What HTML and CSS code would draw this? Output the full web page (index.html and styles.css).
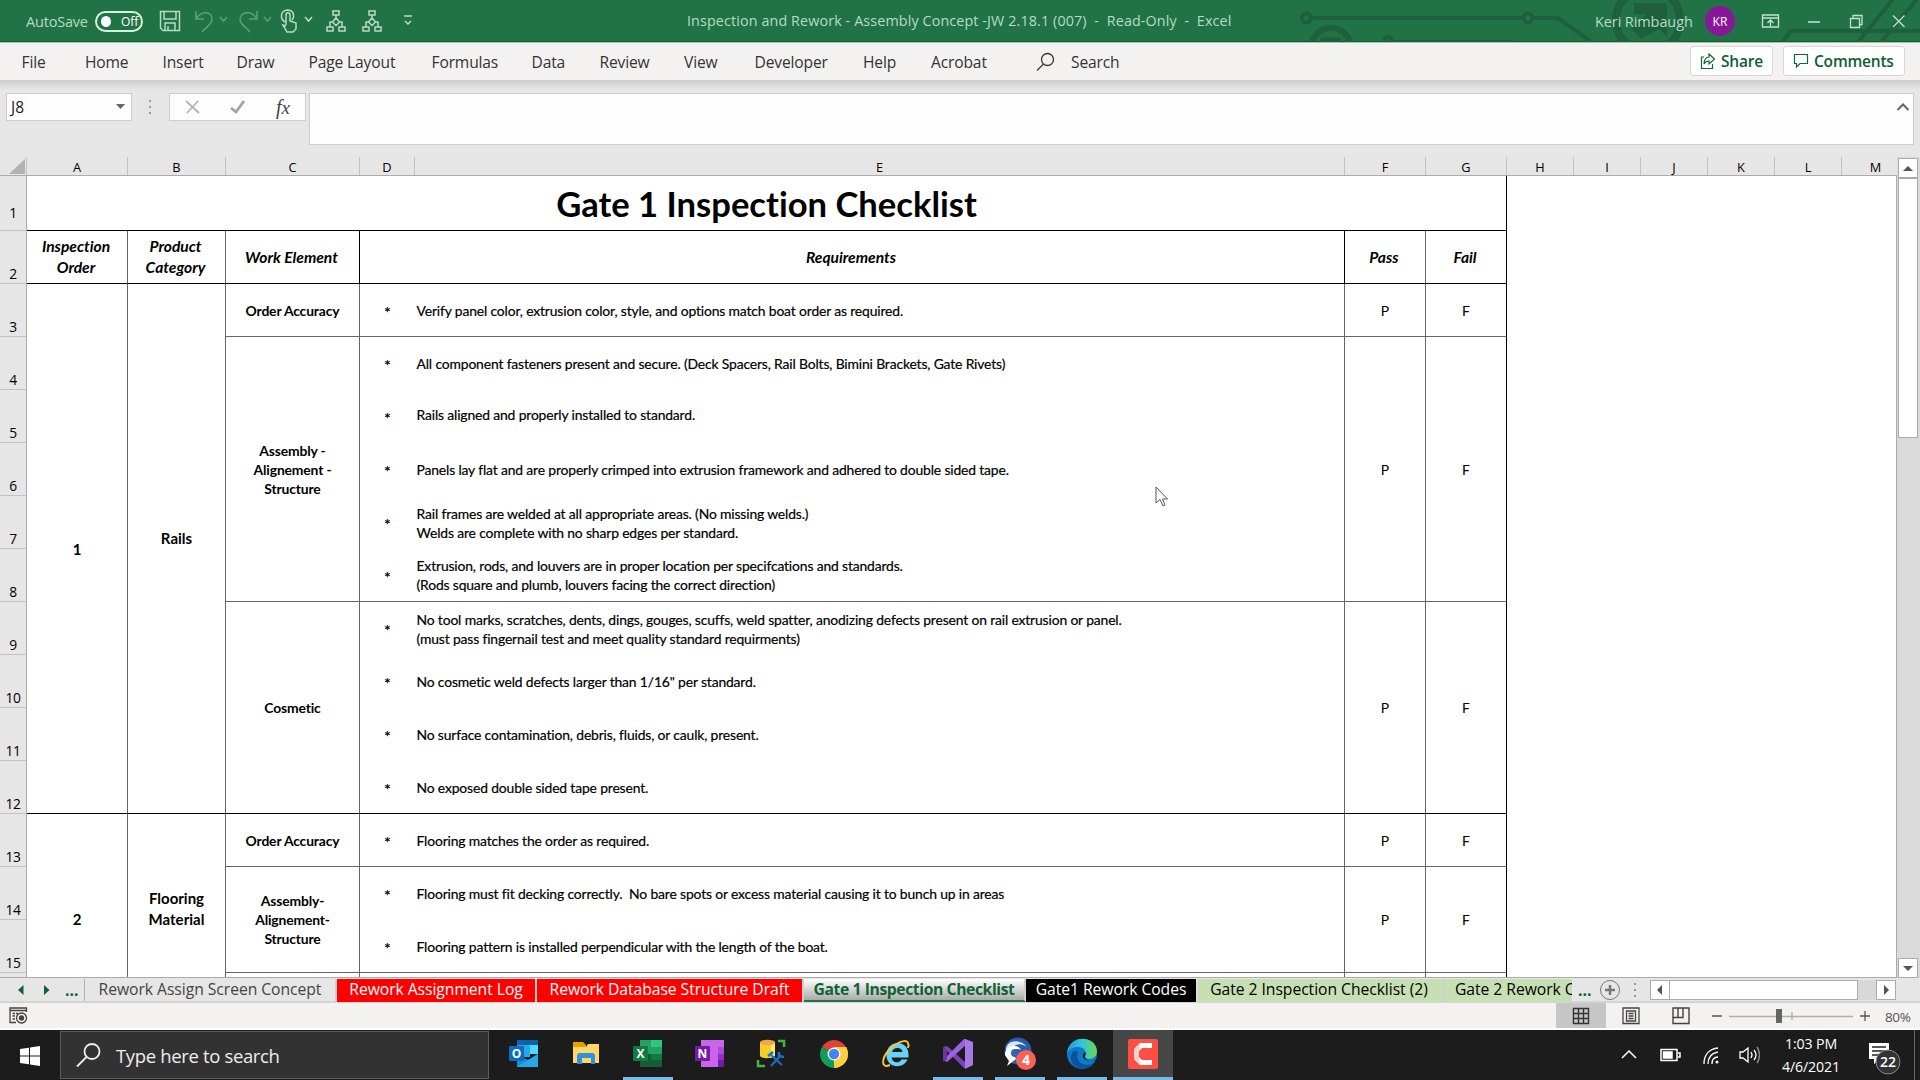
FILE: index.html
```
<!DOCTYPE html>
<html lang="en">
<head>
<meta charset="utf-8">
<title>Inspection and Rework - Excel</title>
<link rel="stylesheet" href="styles.css">
</head>
<body>
<div class="app">
  <header class="titlebar">
    <svg class="circuit" width="640" height="42" viewBox="0 0 640 42" fill="none" stroke="#1e5f3e" stroke-width="4">
      <circle cx="26.500" cy="18" r="4.500"/><path d="M32 18H242M254 18H278L316 45"/><circle cx="248" cy="18" r="4.500"/>
      <circle cx="51" cy="48" r="20" stroke-width="6"/><path d="M40 40H60" stroke-width="5"/>
      <circle cx="108" cy="41" r="4"/><path d="M113 42H235"/>
      <circle cx="368" cy="20" r="32" stroke-width="8"/><path d="M354 3H387V37L379 29L361 39L351 29L367 14H354Z" fill="#1e5f3e" stroke="none"/>
      <path d="M502 42L511 31H640M578 42L614 -2M601 42L638 -2"/>
    </svg>
    <div class="quick">
      <span class="autosave">AutoSave</span>
      <span class="toggle"><i></i>Off</span>
      <svg class="q-icons" width="270" height="30" viewBox="0 0 270 30" fill="none" stroke="#b5dcc3" stroke-width="1.500">
        <path d="M1.500 4.500H20.500V23.500H4L1.500 21ZM5 4.500V12H17V4.500M6 23V16H16V23M9 23V19"/>
        <g stroke="#5c9f78"><path d="M37 4V12H45M37 12C43 2 54 5 53 13C52 18 47 20 43 25M61 10L64.500 14L68 10"/><path d="M98 4V12H90M98 12C92 2 81 5 81 13C82 18 87 20 91 25M105 10L108.500 14L112 10"/></g>
        <path d="M126 15C121 12 121 4 128 3C135 3 136 9 133 13M127 18V8C127 5 131 5 131 8V14L137 16V22L134 25H128L124 18L127 19M146 10L149.500 14L153 10"/>
        <path id="tree" d="M174 4H180V8H174ZM177 8V11M177 11L180.500 15L177 18.500L173.500 15ZM173.500 15H171V20M180.500 15H183V20M168 20H174V24H168ZM180 20H186V24H180Z"/>
        <use href="#tree" x="36"/>
        <path d="M245 9H253M246 14L249 17L252 14"/>
      </svg>
    </div>
    <div class="doc-title">Inspection and Rework - Assembly Concept -JW 2.18.1 (007)&nbsp; - &nbsp;Read-Only&nbsp; - &nbsp;Excel</div>
    <div class="account"><span class="user">Keri Rimbaugh</span><span class="avatar">KR</span>
      <svg width="150" height="24" viewBox="0 0 150 24" fill="none" stroke="#c4e3cf" stroke-width="1.300">
        <path d="M1.500 6H17.500V18H1.500ZM1.500 9H17.500M9.500 17V11M6.500 14L9.500 11L12.500 14M47 13H59M89.500 9.500H98.500V18.500H89.500ZM92 9V6.500H101V15.500H99M132 6.500L143.500 18M143.500 6.500L132 18"/>
      </svg>
    </div>
  </header>

  <nav class="ribbon">
    <div class="menu"><span>File</span><span>Home</span><span>Insert</span><span>Draw</span><span>Page Layout</span><span>Formulas</span><span>Data</span><span>Review</span><span>View</span><span>Developer</span><span>Help</span><span>Acrobat</span>
      <svg width="24" height="24" viewBox="0 0 24 24" fill="none" stroke="#3b3a39" stroke-width="1.300"><circle cx="11.500" cy="9.500" r="6"/><path d="M7.500 14L1 20.500"/></svg>
      <span>Search</span></div>
    <div class="ribbon-actions">
      <button class="btn share"><svg width="16" height="18" viewBox="0 0 16 18" fill="none" stroke="#0c6b38" stroke-width="1.200"><path d="M4 5H1.500V16.500H12.500V12M9 2L14.500 7L9 12V9C6 9 5 10 4 12C4 8 6 5 9 5Z"/></svg>Share</button>
      <button class="btn comments"><svg width="16" height="18" viewBox="0 0 16 18" fill="none" stroke="#0c6b38" stroke-width="1.200"><path d="M1.500 2.500H14.500V11.500H7L3.500 15V11.500H1.500Z"/></svg>Comments</button>
    </div>
  </nav>

  <div class="formula">
    <div class="namebox"><span>J8</span><svg width="10" height="6" viewBox="0 0 10 6"><path d="M0 0H9L4.500 5Z" fill="#666"/></svg></div>
    <svg class="grip" width="4" height="14" viewBox="0 0 4 14" fill="#999"><path d="M1 0H3V2H1ZM1 6H3V8H1ZM1 12H3V14H1Z"/></svg>
    <div class="fx"><svg width="66" height="20" viewBox="0 0 66 20" fill="none"><path d="M2 4L15 16M14 4L3 16" stroke="#b4b4b4" stroke-width="1.800"/><path d="M47 11L52 15L60 4" stroke="#a3a3a3" stroke-width="2.800"/></svg><span>f<small>x</small></span></div>
    <div class="input"><svg width="14" height="10" viewBox="0 0 14 10" fill="none" stroke="#666" stroke-width="2"><path d="M1.500 8L7 2.500L12.500 8"/></svg></div>
  </div>

  <main class="sheet">
    <div class="colheads">
      <span class="corner"><svg width="16" height="15" viewBox="0 0 16 15"><path d="M16 0V15H0Z" fill="#b2b2b2"/></svg></span>
      <span>A</span><span>B</span><span>C</span><span>D</span><span>E</span><span>F</span><span>G</span><span>H</span><span>I</span><span>J</span><span>K</span><span>L</span><span class="last">M</span>
    </div>
    <div class="body">
      <div class="rownums"><span class="first">1</span><span>2</span><span>3</span><span>4</span><span>5</span><span>6</span><span>7</span><span>8</span><span>9</span><span>10</span><span>11</span><span>12</span><span>13</span><span>14</span><span>15</span><span></span></div>
      <div class="table">
        <div class="c title strong">Gate 1 Inspection Checklist</div>
        <div class="c head">Inspection<br>Order</div><div class="c head">Product<br>Category</div><div class="c head dark">Work Element</div><div class="c head wide dark">Requirements</div><div class="c head">Pass</div><div class="c head edge">Fail</div>

        <div class="c big r10 order">1</div><div class="c big r10 product">Rails</div>
        <div class="c work">Order Accuracy</div>
        <div class="c star">*</div><div class="c req">Verify panel color, extrusion color, style, and options match boat order as required.</div>
        <div class="c pf">P</div><div class="c pf edge">F</div>

        <div class="c work r5">Assembly -<br>Alignement -<br>Structure</div>
        <div class="c star open">*</div><div class="c req open">All component fasteners present and secure. (Deck Spacers, Rail Bolts, Bimini Brackets, Gate Rivets)</div>
        <div class="c pf r5">P</div><div class="c pf edge r5">F</div>
        <div class="c star open">*</div><div class="c req open raised">Rails aligned and properly installed to standard.</div>
        <div class="c star open">*</div><div class="c req open">Panels lay flat and are properly crimped into extrusion framework and adhered to double sided tape.</div>
        <div class="c star open">*</div><div class="c req open">Rail frames are welded at all appropriate areas. (No missing welds.)<br>Welds are complete with no sharp edges per standard.</div>
        <div class="c star">*</div><div class="c req">Extrusion, rods, and louvers are in proper location per specifcations and standards.<br>(Rods square and plumb, louvers facing the correct direction)</div>

        <div class="c work r4 strong">Cosmetic</div>
        <div class="c star open">*</div><div class="c req open">No tool marks, scratches, dents, dings, gouges, scuffs, weld spatter, anodizing defects present on rail extrusion or panel.<br>(must pass fingernail test and meet quality standard requirments)</div>
        <div class="c pf r4 strong">P</div><div class="c pf edge r4 strong">F</div>
        <div class="c star open">*</div><div class="c req open">No cosmetic weld defects larger than 1/16" per standard.</div>
        <div class="c star open">*</div><div class="c req open">No surface contamination, debris, fluids, or caulk, present.</div>
        <div class="c star strong">*</div><div class="c req strong">No exposed double sided tape present.</div>

        <div class="c big r4 open order2">2</div><div class="c big r4 open product2">Flooring<br>Material</div>
        <div class="c work">Order Accuracy</div>
        <div class="c star">*</div><div class="c req">Flooring matches the order as required.</div>
        <div class="c pf">P</div><div class="c pf edge">F</div>
        <div class="c work r2">Assembly-<br>Alignement-<br>Structure</div>
        <div class="c star open">*</div><div class="c req open">Flooring must fit decking correctly.&nbsp; No bare spots or excess material causing it to bunch up in areas</div>
        <div class="c pf r2">P</div><div class="c pf edge r2">F</div>
        <div class="c star">*</div><div class="c req">Flooring pattern is installed perpendicular with the length of the boat.</div>
        <div class="c open"></div><div class="c open star"></div><div class="c open req"></div><div class="c open"></div><div class="c open edge"></div>
      </div>
      <div class="empty"></div>
    </div>
    <div class="vscroll">
      <span class="sbtn"><svg width="10" height="7" viewBox="0 0 10 7"><path d="M5 1L10 6H0Z" fill="#555"/></svg></span>
      <span class="vthumb"></span><span class="vtrack"></span>
      <span class="sbtn"><svg width="10" height="7" viewBox="0 0 10 7"><path d="M5 6L10 1H0Z" fill="#555"/></svg></span>
    </div>
  </main>

  <div class="tabs">
    <div class="tabnav"><svg width="34" height="12" viewBox="0 0 34 12" fill="#0e6434"><path d="M5.500 1V11L0 6ZM26 1V11L31.500 6Z"/></svg><b>...</b></div>
    <span class="tab plain">Rework Assign Screen Concept</span>
    <span class="tab red log">Rework Assignment Log</span>
    <span class="tab red draft">Rework Database Structure Draft</span>
    <span class="tab active">Gate 1 Inspection Checklist</span>
    <span class="tab black">Gate1 Rework Codes</span>
    <span class="tab green g1">Gate 2 Inspection Checklist (2)</span>
    <span class="tab green g2">Gate 2 Rework C</span>
    <b class="more">...</b>
    <svg class="add" width="22" height="22" viewBox="0 0 22 22" fill="none" stroke="#777"><circle cx="11" cy="11" r="9.500"/><path d="M6 11H16M11 6V16" stroke-width="2.500"/></svg>
    <svg class="grip2" width="4" height="14" viewBox="0 0 4 14" fill="#999"><path d="M1 0H3V2H1ZM1 6H3V8H1ZM1 12H3V14H1Z"/></svg>
    <div class="hscroll"><span class="hbtn"><svg width="6" height="10" viewBox="0 0 6 10"><path d="M5 0V10L0 5Z" fill="#555"/></svg></span><span class="hthumb"></span><span class="htrack"></span><span class="hbtn"><svg width="6" height="10" viewBox="0 0 6 10"><path d="M1 0V10L6 5Z" fill="#555"/></svg></span></div>
  </div>

  <div class="status">
    <svg class="macro" width="20" height="18" viewBox="0 0 20 18" fill="none" stroke="#444" stroke-width="1.300"><path d="M17.500 5V1H1V15.500H7M1 3.500H17.500M3.500 6.500H6M7 6.500H9M3.500 9H6M3.500 12H6"/><circle cx="12.500" cy="11" r="5"/><circle cx="12.500" cy="11" r="2" fill="#444"/></svg>
    <div class="views">
      <span class="view on"><svg width="18" height="18" viewBox="0 0 18 18" fill="none" stroke="#333" stroke-width="1.400"><path d="M1.500 1.500H16.500V16.500H1.500ZM6.500 1V17M11.500 1V17M1 6.500H17M1 11.500H17"/></svg></span>
      <span class="view"><svg width="18" height="18" viewBox="0 0 18 18" fill="none" stroke="#444" stroke-width="1.300"><path d="M1 1H17V16.500H1ZM4.500 4H13.500V14H4.500ZM6.500 6.500H11.500M6.500 9H11.500M6.500 11.500H11.500"/></svg></span>
      <span class="view"><svg width="18" height="18" viewBox="0 0 18 18" fill="none" stroke="#444" stroke-width="1.400"><path d="M1 1H17V16.500H1ZM1 10.500H11V1M6 1V10"/></svg></span>
    </div>
    <svg class="zoom" width="164" height="18" viewBox="0 0 164 18"><path d="M0 9H10M148 9H158M153 4V14" stroke="#555" stroke-width="1.300"/><path d="M17 9.500H141" stroke="#b0b0b0" stroke-width="1.500"/><path d="M80 5V13" stroke="#999"/><path d="M64 2H70V16H64Z" fill="#666"/></svg>
    <span class="pct">80%</span>
  </div>

  <footer class="taskbar">
    <div class="start"><svg width="20" height="20" viewBox="0 0 20 20" fill="#fff"><path d="M0 3L9 1.700V9.500H0ZM10 1.500L20 0V9.500H10ZM0 10.500H9V18.300L0 17ZM10 10.500H20V20L10 18.500Z"/></svg></div>
    <div class="search"><svg width="26" height="26" viewBox="0 0 26 26" fill="none" stroke="#eee" stroke-width="1.800"><circle cx="16" cy="9.500" r="7.500"/><path d="M10.500 15L1 24.500"/></svg><span>Type here to search</span></div>
    <div class="apps">
      <span class="app-icon"><svg width="32" height="32" viewBox="0 0 32 32"><path d="M9 2H30V16H9Z" fill="#1066b5"/><path d="M9 7H22V19H9Z" fill="#28a8ea"/><path d="M22 7H30V16H22Z" fill="#50d9ff"/><path d="M15 2H30V7H15Z" fill="#0a63a8"/><path d="M9 17L20 22L30 16V29H9Z" fill="#1490df"/><path d="M9 29L30 16V29Z" fill="#28a8ea"/><rect x="1" y="8" width="15" height="15" rx="1" fill="#0f6cbd"/><text x="8.500" y="20" class="letter">O</text></svg></span>
      <span class="app-icon"><svg width="32" height="32" viewBox="0 0 32 32"><path d="M3 4H13L16 7V12H3Z" fill="#e8a000"/><path d="M3 9H16L18 6H29V25H3Z" fill="#ffd668"/><path d="M7 26V18Q7 15 10 15H22Q25 15 25 18V26H21V20H12V26Z" fill="#2f8fe0"/></svg></span>
      <span class="app-icon run"><svg width="32" height="32" viewBox="0 0 32 32"><path d="M8 2H19V16H8Z" fill="#21a366"/><path d="M19 2H30V9H19Z" fill="#33c481"/><path d="M19 9H30V16H19Z" fill="#21a366"/><path d="M8 16H19V29H8Z" fill="#185c37"/><path d="M19 16H30V22H19Z" fill="#107c41"/><path d="M19 22H30V29H19Z" fill="#185c37"/><rect x="1" y="8" width="15" height="15" rx="1" fill="#107c41"/><text x="8.500" y="20" class="letter">X</text></svg></span>
      <span class="app-icon"><svg width="32" height="32" viewBox="0 0 32 32"><path d="M7 2H30V29H7Z" fill="#ca64ea"/><path d="M24 9H30V16H24Z" fill="#ae4bd5"/><path d="M24 16H30V22H24Z" fill="#9332bf"/><path d="M24 22H30V29H24Z" fill="#7719aa"/><rect x="1" y="8" width="15" height="15" rx="1" fill="#7719aa"/><text x="8.500" y="20" class="letter">N</text></svg></span>
      <span class="app-icon"><svg width="32" height="32" viewBox="0 0 32 32" fill="none"><path d="M4 4V18C6 21 15 21 19 18V4Z" fill="#f6ce28"/><path d="M15 4H19V18L15 20Z" fill="#ffe477"/><ellipse cx="11.500" cy="4.500" rx="7.500" ry="2.700" fill="#f3a54a"/><path d="M22 3H28V9M2 22V28H9" stroke="#43b649" stroke-width="2.500"/><path d="M15 17L26 27M25 17L15 28" stroke="#1672c4" stroke-width="2"/><path d="M12 18L17 14M23 14L23 18L28 19" stroke="#1672c4" stroke-width="2.500"/></svg></span>
      <span class="app-icon"><svg width="32" height="32" viewBox="0 0 32 32"><path d="M16 16L3.900 9A14 14 0 0 1 28.100 9Z" fill="#db4437"/><path d="M16 16L28.100 9A14 14 0 0 1 16 30Z" fill="#ffcd40"/><path d="M16 16V30A14 14 0 0 1 3.900 9Z" fill="#0f9d58"/><path d="M16 9H28.100A14 14 0 0 1 16 30L22 19Z" fill="#ffcd40"/><circle cx="16" cy="16" r="6.500" fill="#fff"/><circle cx="16" cy="16" r="5.200" fill="#4285f4"/></svg></span>
      <span class="app-icon"><svg width="32" height="32" viewBox="0 0 32 32" fill="none"><path d="M11 17H28.500C29 1 6.500 1 6.500 17C6.500 31 24 31 27.500 21.500H21.500C19 26 12 25 11.500 19.500H28.500V17" fill="#66d3f7"/><path d="M12 14C13 8.500 22 8.500 22.500 14Z" fill="#1c1c1c"/><path d="M28 10C31 0 20 1 9 12C1 21 1 31 10 27" stroke="#f7c52d" stroke-width="2"/></svg></span>
      <span class="app-icon run"><svg width="32" height="32" viewBox="0 0 32 32"><path d="M1 9L5 8L24 25V30H22Z" fill="#7b44bd"/><path d="M1 22L5 24L24 7V1H22Z" fill="#9b62dc"/><path d="M1 9L5 11V22L1 23Z" fill="#68369f"/><path d="M23 1L31 4V27L23 31Z" fill="#a879e6"/></svg></span>
      <span class="app-icon run"><svg class="chat" width="36" height="34" viewBox="0 0 36 34"><circle cx="16" cy="14" r="13.500" fill="#285da8"/><path d="M4 14C3 3 18 1 25 10C17 4 9 8 10 18Z" fill="#d9e6f7"/><path d="M3 18C2 10 15 5 19 13C13 10 10 15 14 22L5 29L7 24Z" fill="#fff"/><circle cx="13" cy="16" r="4" fill="#2c67b7"/><circle cx="24" cy="23" r="10" fill="#fb6155"/><text x="24" y="28" class="badge">4</text></svg></span>
      <span class="app-icon run"><svg width="32" height="32" viewBox="0 0 32 32"><defs><linearGradient id="edge"><stop offset="0" stop-color="#169ed9"/><stop offset=".5" stop-color="#32c5dc"/><stop offset="1" stop-color="#66d94a"/></linearGradient></defs><circle cx="16" cy="16" r="15" fill="#1277c8"/><path d="M1 15C3 -4 30 -3 31 13C31 21 22 23 19 19C24 8 7 5 1 15Z" fill="url(#edge)"/><path d="M12 14C8 24 20 31 29 24C22 34 5 32 5 20C5 13 10 12 12 14Z" fill="#0b539d"/><path d="M20 14C15 15 15 24 28 23L32 19V23L27 28L31 22C25 25 18 22 19 18Z" fill="#1c1c1c"/></svg></span>
      <span class="app-icon run current"><svg width="32" height="32" viewBox="0 0 32 32"><rect x="1" y="1" width="30" height="30" rx="2" fill="#ff4f45"/><path d="M25 5H13L7 11V21L13 27H25V22H15L12 19V13L15 10H25Z" fill="#fff"/><path d="M7 11L13 5V10L12 13V19L13 27L7 21Z" fill="#eed2d0"/></svg></span>
    </div>
    <div class="tray">
      <svg width="140" height="26" viewBox="0 0 140 26" fill="none" stroke="#fff" stroke-width="1.500">
        <path d="M2 16L9 9L16 16"/><path d="M41 7.500H57V18.500H41ZM58 11H60V15H58"/><path d="M43.500 10H52V16H43.500Z" fill="#fff"/>
        <path d="M84 22C84 13 89 7 98 6M88 22C88 15 92 11 98 10M92 22C92 18 94 15 98 15" stroke-width="1.300"/><circle cx="97" cy="20" r="1.500" fill="#fff" stroke="none"/>
        <path d="M120 10H123L128 6V20L123 16H120ZM131 10Q133 13 131 16M134 8Q138 13 134 18" stroke-width="1.300"/><path d="M137 5Q142 13 137 21" stroke="#888"/>
      </svg>
      <div class="clock"><span>1:03 PM</span><span>4/6/2021</span></div>
      <svg class="note" width="36" height="38" viewBox="0 0 36 38"><path d="M1 3H21V19H12L6 24V19H1Z" fill="#fff"/><path d="M4 7H18M4 11H18M4 15H13" stroke="#222" stroke-width="1.300"/><circle cx="20" cy="22" r="12" fill="#333" stroke="#888"/><text x="20" y="27" class="count">22</text></svg>
      <i class="peek"></i>
    </div>
  </footer>
</div>
<svg class="cursor" width="14" height="22" viewBox="0 0 14 22"><path d="M1 1V17L5 13.500L8 20L10 19L7.500 13H12.500Z" fill="#fff" stroke="#555"/></svg>
</body>
</html>
```
FILE: styles.css
```
* { box-sizing: border-box; }
body { margin: 0; width: 1920px; height: 1080px; overflow: hidden; font-family: "Open Sans", "Noto Sans", sans-serif; color: #000; position: relative; }
svg { display: block; flex: none; }
.app { display: flex; flex-direction: column; height: 1080px; white-space: nowrap; }

/* Title bar */
.titlebar { position: relative; height: 43px; flex: none; background: #217346; border-bottom: 1px solid #a3c4b1; box-shadow: inset 0 -1px #125c31; color: #b5dcc3; display: grid; grid-template-columns: 687px 545px 1fr; align-items: center; }
.circuit { position: absolute; right: 0; top: 0; }
.quick { display: flex; align-items: center; padding-left: 26px; }
.autosave { font-size: 14.500px; width: 69px; letter-spacing: -.200px; }
.toggle { width: 48px; height: 21px; border: 2px solid #d8efe0; border-radius: 11px; color: #fff; font-size: 12px; display: flex; align-items: center; gap: 10px; padding-left: 4px; }
.toggle i { width: 10px; height: 11px; border-radius: 50%; background: #fff; }
.q-icons { margin: 2px 0 0 16px; }
.doc-title { font-size: 14.300px; letter-spacing: .130px; padding-bottom: 2px; }
.account { position: relative; display: flex; align-items: center; padding-left: 363px; font-size: 14.500px; }
.user { width: 110px; letter-spacing: -.100px; }
.avatar { width: 30px; height: 30px; border-radius: 50%; background: #881798; color: #fff; font-size: 12px; display: grid; place-items: center; margin-right: 26px; }

/* Ribbon */
.ribbon { height: 37px; flex: none; background: #f3f2f1; display: flex; justify-content: space-between; color: #333; }
.menu { display: grid; grid-template-columns: 63.500px 77.500px 74px 72px 123px 100px 68px 84.500px 70.500px 108.500px 68px 105px 35px 60px; align-items: center; padding-left: 21.500px; font-size: 15.600px; letter-spacing: -.150px; }
.ribbon-actions { display: flex; gap: 10px; padding: 3px 15px 0 0; }
.btn { height: 30px; border: 1px solid #d9d7d5; border-radius: 3px; background: #fff; color: #0c5f33; font: 600 15.500px "Open Sans", sans-serif; display: flex; align-items: center; gap: 5px; padding: 0 0 0 9px; }
.share { width: 83px; letter-spacing: -.200px; }
.comments { width: 122px; letter-spacing: -.200px; }

/* Formula bar */
.formula { height: 77px; flex: none; background: linear-gradient(#cbcbcb, #dcdcdc 6px, #e6e6e6 10px); display: flex; padding: 13px 6px 0; }
.namebox, .fx, .input { border: 1px solid #cdcdcd; background: #fdfdfd; }
.namebox { width: 126px; height: 28px; display: flex; align-items: center; justify-content: space-between; padding: 0 5px 0 4px; font-size: 15.500px; color: #222; }
.grip { margin: 7px 17px 0 16px; }
.fx { width: 137px; height: 28px; display: flex; align-items: center; padding-left: 14px; }
.fx span { font: italic 20px "Liberation Serif", serif; color: #444; margin-left: 26px; line-height: 20px; }
.fx small { font-size: 19px; }
.input { width: 1606px; height: 52px; margin-left: 3px; display: flex; justify-content: flex-end; padding: 8px 3px; }

/* Sheet */
.sheet { height: 821px; flex: none; display: grid; grid-template: 19px 802px / 1897px 23px; background: #e6e6e6; }
.colheads { display: grid; grid-template-columns: 27px 101px 98px 134px 55px 930px 81px 81px 67px 67px 67px 67px 67px 55px; border-bottom: 1px solid #ababab; font-size: 12.800px; line-height: 21px; text-align: center; }
.colheads span { border-right: 1px solid #c2c2c2; height: 18px; }
.colheads .last { border-right: 0; padding-left: 12px; }
.corner { display: flex; justify-content: flex-end; padding: 2px 1px 0 0; }
.body { grid-row: 2; display: flex; border-right: 1px solid #ababab; border-bottom: 1px solid #ababab; overflow: hidden; background: #fff; }
.rownums { width: 27px; flex: none; display: grid; grid-template-rows: 55px repeat(14, 53px) 5px; background: #e6e6e6; font-size: 13.800px; }
.rownums span { border-right: 1px solid #ababab; border-bottom: 1px solid #c2c2c2; display: flex; align-items: flex-end; justify-content: center; line-height: 18px; letter-spacing: -.400px; }
.rownums .first { padding-bottom: 8px; }
.table { width: 1480px; flex: none; display: grid; grid-template-columns: 101px 98px 134px 55px 930px 81px 81px; grid-template-rows: 55px repeat(14, 53px) 5px; font-family: Lato, "Liberation Sans", sans-serif; font-size: 13.900px; line-height: 19px; font-variant-ligatures: none; }
.c { border-right: 1px solid #666; border-bottom: 1px solid #666; display: flex; align-items: center; justify-content: center; text-align: center; min-width: 0; }
.title { grid-column: 1 / -1; font-size: 34.600px; font-weight: 700; border-right-color: #000; padding: 1px 0 0 0; }
.head { font-size: 15.600px; font-weight: 700; font-style: italic; line-height: 21px; padding-right: 2px; border-bottom-color: #000; }
.wide { grid-column: span 2; }
.dark { border-right-color: #000; }
.edge { border-right-color: #000; }
.strong { border-bottom-color: #000; }
.open { border-bottom: 0; }
.r2 { grid-row: span 2; }
.r4 { grid-row: span 4; }
.r5 { grid-row: span 5; }
.r10 { grid-row: span 10; border-bottom-color: #000; }
.big { font-size: 15px; font-weight: 700; line-height: 21px; }
.order { padding-top: 2px; }
.product { padding-bottom: 20px; }
.work { font-size: 13.900px; font-weight: 700; letter-spacing: -.150px; }
.star { border-right: 0; font-size: 16px; font-weight: 700; padding-top: 2px; }
.req { justify-content: flex-start; text-align: left; padding-left: 1.500px; letter-spacing: -.150px; -webkit-text-stroke: .200px #000; }
.raised { padding-bottom: 5px; }
.order2 { padding-top: 46px; }
.product2 { padding-top: 26px; }

/* Vertical scroll bar */
.vscroll { grid-column: 2; grid-row: 1 / 3; padding: 1px 2px 0 1px; display: flex; flex-direction: column; background: #dadada; }
.sbtn { height: 20px; background: #fff; border: 1px solid #ababab; display: grid; place-items: center; flex: none; }
.vthumb { height: 260px; background: #fff; border: 1px solid #ababab; }
.vtrack { flex: 1; }

/* Sheet tabs */
.tabs { height: 25px; flex: none; background: #e6e6e6; display: flex; padding-top: 1px; border-bottom: 2px solid #d4d4d4; font-size: 15.700px; }
.tabnav { width: 85px; display: flex; align-items: center; padding-left: 18px; border-right: 1px solid #b0b0b0; gap: 13px; color: #0e6434; }
.tabnav b { width: 20px; line-height: 16px; }
.tab { height: 23px; line-height: 20px; overflow: hidden; border-right: 2px solid #d0cdcd; text-align: center; flex: none; letter-spacing: -.050px; }
.plain { width: 252px; color: #444; }
.red { background: #f00; color: #fff; }
.log { width: 200px; }
.draft { width: 267px; }
.active { width: 222px; color: #0e6434; font-weight: 700; background: linear-gradient(#fff, #aaa); border-bottom: 2px solid #217346; letter-spacing: -.400px; }
.black { width: 172px; background: #000; color: #fff; border-color: #ddd; }
.green { background: #c6e0b4; }
.g1 { width: 247px; padding-right: 3px; }
.g2 { width: 127px; text-align: left; padding-left: 10px; border: 0; }
.more { width: 28px; padding-left: 6px; color: #0e6434; }
.add { margin-left: -1px; }
.grip2 { margin: 4px 12px 0 12px; }
.hscroll { width: 246px; flex: none; height: 20px; display: flex; margin: 1px 0 0 1px; background: #d8d8d8; }
.hbtn { width: 20px; background: #fff; border: 1px solid #ababab; display: grid; place-items: center; }
.hthumb { width: 189px; margin-left: -1px; background: #fff; border: 1px solid #ababab; }
.htrack { flex: 1; }

/* Status bar */
.status { height: 27px; flex: none; background: #f3f2f1; display: flex; align-items: center; border-bottom: 2px solid #fff; }
.macro { margin-left: 9px; }
.views { display: flex; height: 25px; margin-left: 1527px; }
.view { width: 50px; display: grid; place-items: center; }
.on { background: #c6c6c6; }
.zoom { margin-left: 6px; }
.pct { font-size: 13.500px; color: #555; margin-left: 9px; letter-spacing: -.400px; padding-top: 2px; }

/* Task bar */
.taskbar { height: 50px; flex: none; background: #1c1c1c; display: flex; color: #fff; }
.start { width: 60px; display: grid; place-items: center; padding-top: 1px; }
.search { width: 429px; margin: 1px 0; background: #323232; border: 1px solid #5c5c5c; display: flex; align-items: center; padding-left: 15px; gap: 14px; font-size: 18.500px; color: #eee; }
.search span { letter-spacing: -.350px; padding-top: 1px; }
.apps { display: flex; margin-left: 4px; }
.app-icon { width: 50px; margin: 0 6px; display: grid; place-items: center; padding-top: 1px; border-bottom: 3px solid transparent; }
.run { border-bottom-color: #76b9ed; }
.current { width: 60px; margin: 0; background: #474747; }
.letter { font: 700 12px "Open Sans", sans-serif; fill: #fff; text-anchor: middle; }
.badge { font: 700 14px "Open Sans", sans-serif; fill: #fff; text-anchor: middle; }
.count { font: 600 14px "Open Sans", sans-serif; fill: #fff; text-anchor: middle; }
.tray { margin-left: auto; width: 300px; display: flex; align-items: center; }
.clock { width: 80px; margin-left: 11px; font-size: 14.200px; line-height: 23px; display: flex; flex-direction: column; align-items: center; letter-spacing: -.150px; }
.note { margin: 7px 0 0 17px; }
.peek { width: 1px; height: 50px; margin-left: 10px; background: #666; }

.cursor { position: absolute; left: 1155px; top: 486px; }
```
